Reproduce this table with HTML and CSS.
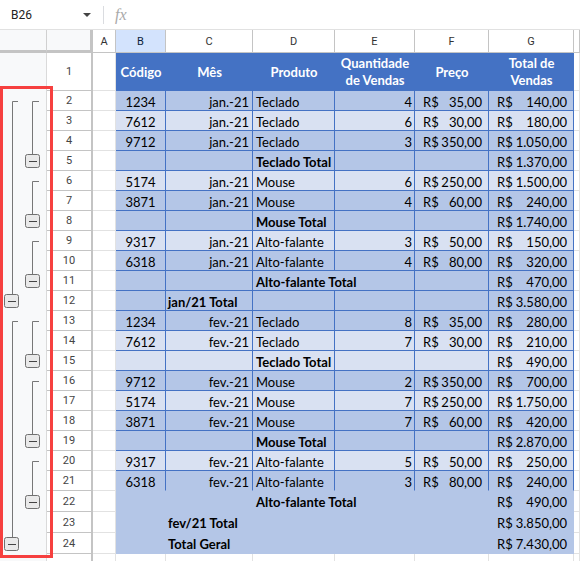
FILE: index.html
```html
<!DOCTYPE html>
<html lang="pt-BR">
<head>
<meta charset="utf-8">
<title>Planilha</title>
<link rel="stylesheet" href="styles.css">
</head>
<body>
<div class="toolbar">
  <div class="namebox"><span>B26</span><svg class="caret" width="8" height="4" viewBox="0 0 8 4"><path d="M0 0H8L4 4Z"/></svg></div>
  <div class="divider"></div>
  <span class="fx">fx</span>
</div>

<div class="sheet">
  <div class="row colhead"><div class="gut"></div><div class="corner"></div><div class="ch">A</div><div class="ch sel">B</div><div class="ch">C</div><div class="ch">D</div><div class="ch">E</div><div class="ch">F</div><div class="ch">G</div><div class="ch"></div></div>

  <div class="row r1"><div class="gut"></div><div class="rh">1</div><div class="c"></div><div class="h">Código</div><div class="h">Mês</div><div class="h">Produto</div><div class="h">Quantidade de Vendas</div><div class="h">Preço</div><div class="h">Total de Vendas</div><div class="c"></div></div>

  <div class="row dk"><div class="gut"></div><div class="rh">2</div><div class="c"></div><div class="t ctr">1234</div><div class="t rt">jan.-21</div><div class="t lf">Teclado</div><div class="t num">4</div><div class="t cur"><span>R$</span><span>35,00</span></div><div class="t cur"><span>R$</span><span>140,00</span></div><div class="c"></div></div>
  <div class="row lt"><div class="gut"></div><div class="rh">3</div><div class="c"></div><div class="t ctr">7612</div><div class="t rt">jan.-21</div><div class="t lf">Teclado</div><div class="t num">6</div><div class="t cur"><span>R$</span><span>30,00</span></div><div class="t cur"><span>R$</span><span>180,00</span></div><div class="c"></div></div>
  <div class="row dk"><div class="gut"></div><div class="rh">4</div><div class="c"></div><div class="t ctr">9712</div><div class="t rt">jan.-21</div><div class="t lf">Teclado</div><div class="t num">3</div><div class="t cur"><span>R$</span><span>350,00</span></div><div class="t cur"><span>R$</span><span>1.050,00</span></div><div class="c"></div></div>
  <div class="row dk"><div class="gut"></div><div class="rh">5</div><div class="c"></div><div class="t"></div><div class="t"></div><div class="t lf b">Teclado Total</div><div class="t"></div><div class="t"></div><div class="t cur"><span>R$</span><span>1.370,00</span></div><div class="c"></div></div>
  <div class="row lt"><div class="gut"></div><div class="rh">6</div><div class="c"></div><div class="t ctr">5174</div><div class="t rt">jan.-21</div><div class="t lf">Mouse</div><div class="t num">6</div><div class="t cur"><span>R$</span><span>250,00</span></div><div class="t cur"><span>R$</span><span>1.500,00</span></div><div class="c"></div></div>
  <div class="row dk"><div class="gut"></div><div class="rh">7</div><div class="c"></div><div class="t ctr">3871</div><div class="t rt">jan.-21</div><div class="t lf">Mouse</div><div class="t num">4</div><div class="t cur"><span>R$</span><span>60,00</span></div><div class="t cur"><span>R$</span><span>240,00</span></div><div class="c"></div></div>
  <div class="row dk"><div class="gut"></div><div class="rh">8</div><div class="c"></div><div class="t"></div><div class="t"></div><div class="t lf b">Mouse Total</div><div class="t"></div><div class="t"></div><div class="t cur"><span>R$</span><span>1.740,00</span></div><div class="c"></div></div>
  <div class="row lt"><div class="gut"></div><div class="rh">9</div><div class="c"></div><div class="t ctr">9317</div><div class="t rt">jan.-21</div><div class="t lf">Alto-falante</div><div class="t num">3</div><div class="t cur"><span>R$</span><span>50,00</span></div><div class="t cur"><span>R$</span><span>150,00</span></div><div class="c"></div></div>
  <div class="row dk"><div class="gut"></div><div class="rh">10</div><div class="c"></div><div class="t ctr">6318</div><div class="t rt">jan.-21</div><div class="t lf">Alto-falante</div><div class="t num">4</div><div class="t cur"><span>R$</span><span>80,00</span></div><div class="t cur"><span>R$</span><span>320,00</span></div><div class="c"></div></div>
  <div class="row dk"><div class="gut"></div><div class="rh">11</div><div class="c"></div><div class="t"></div><div class="t"></div><div class="t lf b span2">Alto-falante Total</div><div class="t"></div><div class="t cur"><span>R$</span><span>470,00</span></div><div class="c"></div></div>
  <div class="row dk"><div class="gut"></div><div class="rh">12</div><div class="c"></div><div class="t"></div><div class="t lf2 b">jan/21 Total</div><div class="t"></div><div class="t"></div><div class="t"></div><div class="t cur"><span>R$</span><span>3.580,00</span></div><div class="c"></div></div>
  <div class="row dk"><div class="gut"></div><div class="rh">13</div><div class="c"></div><div class="t ctr">1234</div><div class="t rt">fev.-21</div><div class="t lf">Teclado</div><div class="t num">8</div><div class="t cur"><span>R$</span><span>35,00</span></div><div class="t cur"><span>R$</span><span>280,00</span></div><div class="c"></div></div>
  <div class="row lt"><div class="gut"></div><div class="rh">14</div><div class="c"></div><div class="t ctr">7612</div><div class="t rt">fev.-21</div><div class="t lf">Teclado</div><div class="t num">7</div><div class="t cur"><span>R$</span><span>30,00</span></div><div class="t cur"><span>R$</span><span>210,00</span></div><div class="c"></div></div>
  <div class="row lt"><div class="gut"></div><div class="rh">15</div><div class="c"></div><div class="t"></div><div class="t"></div><div class="t lf b">Teclado Total</div><div class="t"></div><div class="t"></div><div class="t cur"><span>R$</span><span>490,00</span></div><div class="c"></div></div>
  <div class="row dk"><div class="gut"></div><div class="rh">16</div><div class="c"></div><div class="t ctr">9712</div><div class="t rt">fev.-21</div><div class="t lf">Mouse</div><div class="t num">2</div><div class="t cur"><span>R$</span><span>350,00</span></div><div class="t cur"><span>R$</span><span>700,00</span></div><div class="c"></div></div>
  <div class="row lt"><div class="gut"></div><div class="rh">17</div><div class="c"></div><div class="t ctr">5174</div><div class="t rt">fev.-21</div><div class="t lf">Mouse</div><div class="t num">7</div><div class="t cur"><span>R$</span><span>250,00</span></div><div class="t cur"><span>R$</span><span>1.750,00</span></div><div class="c"></div></div>
  <div class="row dk"><div class="gut"></div><div class="rh">18</div><div class="c"></div><div class="t ctr">3871</div><div class="t rt">fev.-21</div><div class="t lf">Mouse</div><div class="t num">7</div><div class="t cur"><span>R$</span><span>60,00</span></div><div class="t cur"><span>R$</span><span>420,00</span></div><div class="c"></div></div>
  <div class="row dk"><div class="gut"></div><div class="rh">19</div><div class="c"></div><div class="t"></div><div class="t"></div><div class="t lf b">Mouse Total</div><div class="t"></div><div class="t"></div><div class="t cur"><span>R$</span><span>2.870,00</span></div><div class="c"></div></div>
  <div class="row lt"><div class="gut"></div><div class="rh">20</div><div class="c"></div><div class="t ctr">9317</div><div class="t rt">fev.-21</div><div class="t lf">Alto-falante</div><div class="t num">5</div><div class="t cur"><span>R$</span><span>50,00</span></div><div class="t cur"><span>R$</span><span>250,00</span></div><div class="c"></div></div>
  <div class="row dk nbb"><div class="gut"></div><div class="rh">21</div><div class="c"></div><div class="t ctr">6318</div><div class="t rt">fev.-21</div><div class="t lf">Alto-falante</div><div class="t num">3</div><div class="t cur"><span>R$</span><span>80,00</span></div><div class="t cur"><span>R$</span><span>240,00</span></div><div class="c"></div></div>
  <div class="row dk nb tall"><div class="gut"></div><div class="rh">22</div><div class="c"></div><div class="t"></div><div class="t"></div><div class="t lf b span2">Alto-falante Total</div><div class="t"></div><div class="t cur"><span>R$</span><span>490,00</span></div><div class="c"></div></div>
  <div class="row dk nb tall"><div class="gut"></div><div class="rh">23</div><div class="c"></div><div class="t"></div><div class="t lf2 b">fev/21 Total</div><div class="t"></div><div class="t"></div><div class="t"></div><div class="t cur"><span>R$</span><span>3.850,00</span></div><div class="c"></div></div>
  <div class="row dk nb tall"><div class="gut"></div><div class="rh">24</div><div class="c"></div><div class="t"></div><div class="t lf2 b">Total Geral</div><div class="t"></div><div class="t"></div><div class="t"></div><div class="t cur"><span>R$</span><span>7.430,00</span></div><div class="c"></div></div>
  <div class="row"><div class="gut"></div><div class="rh"></div><div class="c"></div><div class="c"></div><div class="c"></div><div class="c"></div><div class="c"></div><div class="c"></div><div class="c"></div><div class="c"></div></div>
</div>

<svg class="outline" width="47" height="561" viewBox="0 0 47 561">
  <g class="lines">
    <path d="M39 101.5H32.5V154.5"/>
    <path d="M39 181.5H32.5V214.5"/>
    <path d="M39 241.5H32.5V274.5"/>
    <path d="M39 321.5H32.5V354.5"/>
    <path d="M39 381.5H32.5V434.5"/>
    <path d="M39 461.5H32.5V495.5"/>
    <path d="M18 101.5H12.5V294.5"/>
    <path d="M18 321.5H12.5V537.5"/>
  </g>
  <g class="boxes">
    <rect x="25.5" y="154.5" width="14" height="13" rx="2"/>
    <rect x="25.5" y="214.5" width="14" height="13" rx="2"/>
    <rect x="25.5" y="274.5" width="14" height="13" rx="2"/>
    <rect x="25.5" y="354.5" width="14" height="13" rx="2"/>
    <rect x="25.5" y="434.5" width="14" height="13" rx="2"/>
    <rect x="25.5" y="495.5" width="14" height="13" rx="2"/>
    <rect x="4.5" y="294.5" width="14" height="13" rx="2"/>
    <rect x="4.5" y="537.5" width="14" height="13" rx="2"/>
  </g>
  <g class="minus">
    <path d="M29 161.5H37M29 221.5H37M29 281.5H37M29 361.5H37M29 441.5H37M29 502.5H37M8 301.5H16M8 544.5H16"/>
  </g>
</svg>
<div class="focus"></div>
</body>
</html>
```

FILE: styles.css
```css
* { box-sizing: border-box; margin: 0; padding: 0; }
html, body { width: 580px; height: 561px; overflow: hidden; background: #fff; }
body { position: relative; font-family: Roboto, "Liberation Sans", sans-serif; }

.toolbar {
  height: 30px;
  border-bottom: 1px solid #e1e1e1;
  display: flex;
  align-items: center;
  padding-left: 11px;
}
.namebox {
  width: 80px;
  display: flex;
  justify-content: space-between;
  align-items: center;
  font-size: 12px;
  color: #222;
}
.caret { fill: #444; }
.divider { width: 1px; height: 18px; background: #dadce0; margin-left: 12px; }
.fx {
  margin-left: 11px;
  font-family: "Liberation Serif", serif;
  font-style: italic;
  font-size: 16px;
  color: #a9a9a9;
}

.row {
  display: grid;
  grid-template-columns: 47px 46px 23px 50px 87px 82px 80px 74px 85px 1fr;
  height: 20px;
}
.colhead { height: 23px; }
.r1 { height: 38px; }
.tall { height: 21px; }

.gut { background: #f8f9fa; border-right: 1px solid #dadada; }
.colhead .gut { border-bottom: 3px solid #c4c4c4; border-right-color: #d0d0d0; }
.corner { background: #f8f9fa; border-right: 3px solid #c4c4c4; border-bottom: 3px solid #c4c4c4; }
.ch {
  display: flex; align-items: center; justify-content: center;
  font-size: 11px; color: #333;
  border-right: 1px solid #c4c4c4; border-bottom: 1px solid #c4c4c4;
}
.ch.sel { background: #d3e3fd; color: #0b1f3a; }
.rh {
  display: flex; align-items: center; justify-content: center;
  font-size: 11px; color: #444;
  border-right: 2px solid #c4c4c4; border-bottom: 1px solid #c4c4c4;
}
.c { border-right: 1px solid #e2e2e2; border-bottom: 1px solid #e2e2e2; }

.h {
  background: #4472c4;
  color: #fff;
  font-family: Lato, "Liberation Sans", sans-serif;
  font-weight: 700;
  font-size: 13px;
  line-height: 17px;
  display: flex; align-items: center; justify-content: center;
  text-align: center;
  padding: 0 2px;
}

.t {
  font-family: Lato, "Liberation Sans", sans-serif;
  font-size: 13px;
  color: #000;
  line-height: 16px;
  padding-top: 3px;
  white-space: nowrap;
  border-right: 1px solid #4472c4;
  border-bottom: 1px solid #4472c4;
}
.dk .t { background: #b4c6e7; }
.lt .t { background: #d9e1f2; }
.nb .t { border-color: transparent; }
.nbb .t { border-bottom-color: transparent; }

.ctr { text-align: center; }
.rt { text-align: right; padding-right: 3px; }
.num { text-align: right; padding-right: 2px; }
.lf { padding-left: 3px; }
.lf2 { padding-left: 2px; }
.b { font-weight: 700; }
.span2 { grid-column: span 2; }
.cur { display: flex; justify-content: space-between; padding-left: 8px; padding-right: 6px; }

.outline { position: absolute; left: 0; top: 0; }
.lines path { fill: none; stroke: #777; stroke-width: 1; }
.boxes rect { fill: #e9e9e9; stroke: #707070; stroke-width: 1; }
.minus path { fill: none; stroke: #444; stroke-width: 1; }

.focus {
  position: absolute;
  left: 0; top: 86px;
  width: 53px; height: 472px;
  border: 3px solid #f6403f;
}
```
